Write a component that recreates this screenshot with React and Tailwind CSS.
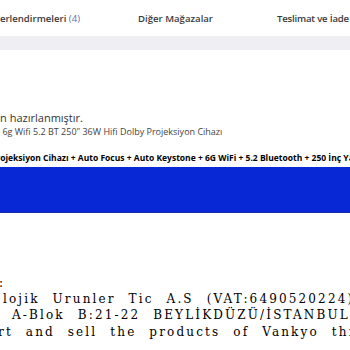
export default function App() {
  const sans = { fontFamily: '"Open Sans", "Noto Sans", sans-serif' };
  return (
    <div className="w-[350px] h-[350px] overflow-hidden bg-white relative" style={sans}>
      <div className="flex items-center h-[36px] pt-[3px] whitespace-nowrap text-[9.6px] font-semibold text-[#3a3a3a]">
        <div className="ml-[-18px] w-[156px] shrink-0">
          Değerlendirmeleri <span className="font-medium text-[#6e6aa8]">(4)</span>
        </div>
        <div className="w-[139px] shrink-0">Diğer Mağazalar</div>
        <div className="shrink-0 tracking-[-0.2px]">Teslimat ve İade</div>
      </div>
      <div className="h-[14px] bg-[#efeff3]"></div>

      <div className="pt-[60px] whitespace-nowrap">
        <div className="ml-[-6px] text-[11px] text-[#333] leading-[15px]">an hazırlanmıştır.</div>
        <div className="ml-[-5px] mt-[1px] text-[9px] text-[#444] leading-[12px]">
          e 6g Wifi 5.2 BT 250" 36W Hifi Dolby Projeksiyon Cihazı
        </div>
        <div className="ml-[-9px] mt-[14px] text-[8.5px] font-bold text-black leading-[12px]">
          Projeksiyon Cihazı + Auto Focus + Auto Keystone + 6G WiFi + 5.2 Bluetooth + 250 İnç Yansıtma
        </div>
        <div className="mt-[3px] h-[46px] bg-[#0828d6] border-b-[1px] border-[#1a2aa8]"></div>
      </div>

      <div
        className="pt-[62px] whitespace-nowrap text-[12px] text-black leading-[16.2px] tracking-[2.15px] [word-spacing:7px]"
        style={{ fontFamily: '"DejaVu Serif", "Liberation Serif", serif' }}
      >
        <div className="ml-[-1px]">:</div>
        <div className="ml-[3px]">lojik Urunler Tic A.S (VAT:6490520224)</div>
        <div className="ml-[12px]">A-Blok B:21-22 BEYLİKDÜZÜ/İSTANBUL</div>
        <div className="ml-[-2px]">rt and sell the products of Vankyo through</div>
      </div>
    </div>
  );
}
